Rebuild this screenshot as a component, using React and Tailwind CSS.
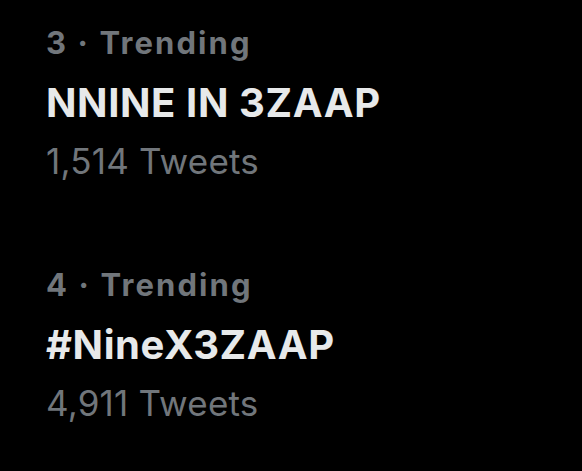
const TRENDS = [
  { rank: 3, name: "NNINE IN 3ZAAP", count: "1,514" },
  { rank: 4, name: "#NineX3ZAAP", count: "4,911" },
];

function TrendItem({ rank, name, count }) {
  return (
    <div className="flex flex-col">
      <div className="text-[31px] leading-[40px] font-bold tracking-[2.1px] text-[#71767b]">
        {rank} · Trending
      </div>
      <div className="mt-[10px] text-[40px] leading-[60px] font-bold tracking-[0.6px] text-[#e7e9ea]">
        {name}
      </div>
      <div className="mt-[4px] text-[35px] leading-[48px] tracking-[0.2px] text-[#71767b]">
        {count} Tweets
      </div>
    </div>
  );
}

export default function App() {
  return (
    <div
      className="w-[582px] h-[471px] bg-black pl-[46px] pt-[23px] flex flex-col gap-[80px] overflow-hidden"
      style={{ fontFamily: "Inter, 'Liberation Sans', sans-serif" }}
    >
      {TRENDS.map((t) => (
        <TrendItem key={t.rank} {...t} />
      ))}
    </div>
  );
}
